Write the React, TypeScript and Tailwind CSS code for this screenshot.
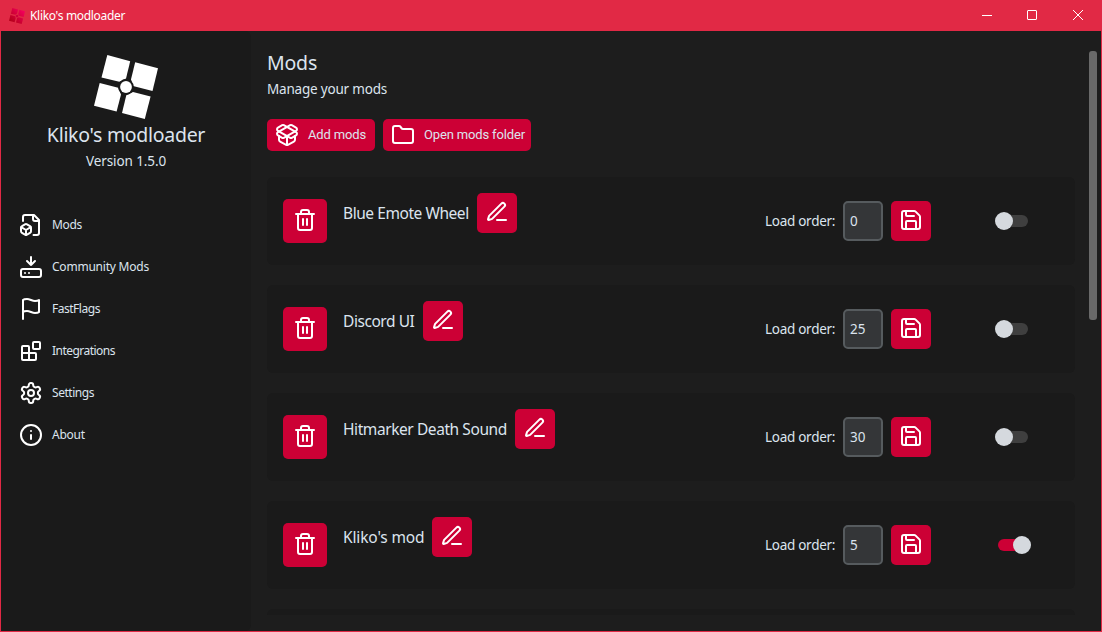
import React from "react";

type IconProps = { children: React.ReactNode };

function Icon({ children }: IconProps) {
  return (
    <svg
      className="block size-6 shrink-0"
      viewBox="0 0 24 24"
      fill="none"
      stroke="#ffffff"
      strokeWidth="2"
      strokeLinecap="round"
      strokeLinejoin="round"
    >
      {children}
    </svg>
  );
}

const FileBox = () => (
  <Icon>
    <path d="M14.5 22H18a2 2 0 0 0 2-2V7l-5-5H6a2 2 0 0 0-2 2v4" />
    <path d="M14 2v4a2 2 0 0 0 2 2h4" />
    <path d="M3 13.1a2 2 0 0 0-1 1.76v3.24a2 2 0 0 0 .97 1.78L6 21.7a2 2 0 0 0 2.03.01L11 19.9a2 2 0 0 0 1-1.76V14.9a2 2 0 0 0-.97-1.78L8 11.3a2 2 0 0 0-2.03-.01Z" />
    <path d="M7 17v5M11.7 14.2 7 17l-4.7-2.8" />
  </Icon>
);
const DriveDownload = () => (
  <Icon>
    <path d="M12 2v8M16 6l-4 4-4-4" />
    <rect width="20" height="8" x="2" y="14" rx="2" />
    <path d="M6 18h.01M10 18h.01" />
  </Icon>
);
const Flag = () => (
  <Icon>
    <path d="M4 15s1-1 4-1 5 2 8 2 4-1 4-1V3s-1 1-4 1-5-2-8-2-4 1-4 1zM4 22v-7" />
  </Icon>
);
const Blocks = () => (
  <Icon>
    <rect width="7" height="7" x="14" y="3" rx="1" />
    <path d="M10 21V8a1 1 0 0 0-1-1H4a1 1 0 0 0-1 1v12a1 1 0 0 0 1 1h12a1 1 0 0 0 1-1v-5a1 1 0 0 0-1-1H3" />
  </Icon>
);
const Gear = () => (
  <Icon>
    <path d="M12.22 2h-.44a2 2 0 0 0-2 2v.18a2 2 0 0 1-1 1.73l-.43.25a2 2 0 0 1-2 0l-.15-.08a2 2 0 0 0-2.73.73l-.22.38a2 2 0 0 0 .73 2.73l.15.1a2 2 0 0 1 1 1.72v.51a2 2 0 0 1-1 1.74l-.15.09a2 2 0 0 0-.73 2.73l.22.38a2 2 0 0 0 2.73.73l.15-.08a2 2 0 0 1 2 0l.43.25a2 2 0 0 1 1 1.73V20a2 2 0 0 0 2 2h.44a2 2 0 0 0 2-2v-.18a2 2 0 0 1 1-1.73l.43-.25a2 2 0 0 1 2 0l.15.08a2 2 0 0 0 2.73-.73l.22-.39a2 2 0 0 0-.73-2.73l-.15-.08a2 2 0 0 1-1-1.74v-.5a2 2 0 0 1 1-1.74l.15-.09a2 2 0 0 0 .73-2.73l-.22-.38a2 2 0 0 0-2.73-.73l-.15.08a2 2 0 0 1-2 0l-.43-.25a2 2 0 0 1-1-1.73V4a2 2 0 0 0-2-2z" />
    <circle cx="12" cy="12" r="3" />
  </Icon>
);
const Info = () => (
  <Icon>
    <circle cx="12" cy="12" r="10" />
    <path d="M12 16v-4M12 8h.01" />
  </Icon>
);
const PackageOpen = () => (
  <Icon>
    <path d="M12 22v-9" />
    <path d="M15.17 2.21a1.67 1.67 0 0 1 1.63 0L21 4.57a1.93 1.93 0 0 1 0 3.36L8.82 14.79a1.655 1.655 0 0 1-1.64 0L3 12.43a1.93 1.93 0 0 1 0-3.36z" />
    <path d="M20 13v3.87a2.06 2.06 0 0 1-1.11 1.83l-6 3.08a1.93 1.93 0 0 1-1.78 0l-6-3.08A2.06 2.06 0 0 1 4 16.87V13" />
    <path d="M21 12.43a1.93 1.93 0 0 0 0-3.36L8.83 2.2a1.64 1.64 0 0 0-1.63 0L3 4.57a1.93 1.93 0 0 0 0 3.36l12.18 6.86a1.636 1.636 0 0 0 1.63 0z" />
  </Icon>
);
const Folder = () => (
  <Icon>
    <path d="M20 20a2 2 0 0 0 2-2V8a2 2 0 0 0-2-2h-7.9a2 2 0 0 1-1.69-.9L9.6 3.9A2 2 0 0 0 7.93 3H4a2 2 0 0 0-2 2v13a2 2 0 0 0 2 2Z" />
  </Icon>
);
const Trash = () => (
  <Icon>
    <path d="M3 6h18M19 6v14c0 1-1 2-2 2H7c-1 0-2-1-2-2V6M8 6V4c0-1 1-2 2-2h4c1 0 2 1 2 2v2M10 11v6M14 11v6" />
  </Icon>
);
const Pen = () => (
  <Icon>
    <path d="M12 20h9" />
    <path d="M16.376 3.622a1 1 0 0 1 3.002 3.002L7.368 18.635a2 2 0 0 1-.855.506l-2.872.838a.5.5 0 0 1-.62-.62l.838-2.872a2 2 0 0 1 .506-.854z" />
  </Icon>
);
const Save = () => (
  <Icon>
    <path d="M15.2 3a2 2 0 0 1 1.4.6l3.8 3.8a2 2 0 0 1 .6 1.4V19a2 2 0 0 1-2 2H5a2 2 0 0 1-2-2V5a2 2 0 0 1 2-2z" />
    <path d="M17 21v-7a1 1 0 0 0-1-1H8a1 1 0 0 0-1 1v7M7 3v4a1 1 0 0 0 1 1h7" />
  </Icon>
);

const QUADS = [
  "107.3,55 130.2,61.2 126,78.4 119.3,81.8 101.5,77.5",
  "135.2,62.3 158,68.3 152.5,91 133,86 131,79.3",
  "99.7,83 118.2,87.8 121,94.5 116.6,111.5 94,105.8",
  "133,92 150.6,96.5 144.8,119 122,113 126.3,95.3",
];

function Logo() {
  return (
    <svg className="block size-16" viewBox="94 55 64 64" fill="#ffffff">
      {QUADS.map((points) => (
        <polygon key={points} points={points} />
      ))}
      <circle cx="126" cy="87" r="7.9" fill="#1a1a1a" />
      <circle cx="126" cy="87" r="5.9" />
    </svg>
  );
}

function TitleLogo() {
  return (
    <svg className="block size-4" viewBox="94 55 64 64">
      <defs>
        <linearGradient id="brand" x1="94" y1="119" x2="158" y2="55" gradientUnits="userSpaceOnUse">
          <stop offset="0" stopColor="#a8000c" />
          <stop offset="1" stopColor="#ff0069" />
        </linearGradient>
      </defs>
      {QUADS.map((points) => (
        <polygon key={points} points={points} fill="url(#brand)" />
      ))}
      <circle cx="126" cy="87" r="5.5" fill="#d0003c" />
    </svg>
  );
}

const NAV = [
  { label: "Mods", icon: <FileBox />, track: "tracking-[-0.3px]" },
  { label: "Community Mods", icon: <DriveDownload />, track: "tracking-[-0.22px]" },
  { label: "FastFlags", icon: <Flag />, track: "tracking-[-0.48px]" },
  { label: "Integrations", icon: <Blocks />, track: "tracking-[-0.53px]" },
  { label: "Settings", icon: <Gear />, track: "tracking-[-0.46px]" },
  { label: "About", icon: <Info />, track: "tracking-[-0.25px]" },
];

const MODS = [
  { name: "Blue Emote Wheel", order: "0", on: false, width: "w-[126px] tracking-[-0.44px]" },
  { name: "Discord UI", order: "25", on: false, width: "w-[72px] tracking-[-0.44px]" },
  { name: "Hitmarker Death Sound", order: "30", on: false, width: "w-[164px] tracking-[-0.42px]" },
  { name: "Kliko's mod", order: "5", on: true, width: "w-[81px] tracking-[-0.14px]" },
];

function Toggle({ on }: { on: boolean }) {
  return on ? (
    <div className="ml-[67px] flex h-[18px] w-[33px] items-center">
      <div className="h-3 w-6 rounded-l-full bg-[#cc0035]" />
      <div className="-ml-[9px] size-[18px] shrink-0 rounded-full bg-[#d5d9de]" />
    </div>
  ) : (
    <div className="ml-16 flex h-[18px] w-[33px] items-center">
      <div className="z-10 size-[18px] shrink-0 rounded-full bg-[#d5d9de]" />
      <div className="-ml-[9px] h-3 w-6 rounded-r-full bg-[#3f3f3f]" />
    </div>
  );
}

function ModCard({ mod }: { mod: (typeof MODS)[number] }) {
  return (
    <div className="flex h-[88px] shrink-0 items-center rounded-md bg-[#1a1a1a] pl-4">
      <button className="flex size-11 items-center justify-center rounded-[5px] bg-[#cc0035] pb-0.5">
        <Trash />
      </button>
      <div className="ml-4 flex items-center self-start pt-4">
        <span className={`${mod.width} text-[15.5px] leading-5 whitespace-nowrap`}>{mod.name}</span>
        <button className="ml-2 flex size-10 items-center justify-center rounded-[5px] bg-[#cc0035] pb-0.5">
          <Pen />
        </button>
      </div>
      <div className="ml-auto flex w-[310px] items-center">
        <span className="w-[78px] text-[13.5px] tracking-[-0.28px] whitespace-nowrap">Load order:</span>
        <div className="flex size-10 items-center rounded-[5px] border-2 border-[#565b5e] bg-[#343638] pl-[5px] text-[13.5px]">
          {mod.order}
        </div>
        <button className="ml-2 flex size-10 items-center justify-center rounded-[5px] bg-[#cc0035] pb-0.5">
          <Save />
        </button>
        <Toggle on={mod.on} />
      </div>
    </div>
  );
}

export default function App() {
  return (
    <div className="flex h-[632px] w-[1102px] flex-col overflow-hidden bg-[#e12945] font-['Noto_Sans',sans-serif] text-[#dce4ee]">
      <header className="flex h-[31px] shrink-0 items-center pl-[9px] text-white">
        <TitleLogo />
        <span className="ml-[5px] text-[12px] tracking-[-0.31px]">Kliko's modloader</span>
        <svg className="ml-auto block h-[31px] w-[138px]" viewBox="964 0 138 31" fill="none" stroke="#ffffff">
          <path d="M982 15.5h10" />
          <path d="M1073 10l10 10M1083 10l-10 10" />
          <rect x="1027.5" y="10.5" width="9" height="9" rx="0.5" />
        </svg>
      </header>
      <div className="mx-px mb-px flex min-h-0 grow bg-[#1d1d1d]">
        <aside className="flex w-[250px] shrink-0 flex-col items-center rounded-r-md bg-[#1a1a1a] pt-6">
          <Logo />
          <h1 className="mt-0.5 text-[19.5px] leading-7 tracking-[-0.29px]">Kliko's modloader</h1>
          <p className="mt-0.5 text-[13.5px] leading-5 tracking-[-0.1px]">Version 1.5.0</p>
          <nav className="mt-[33px] w-full">
            {NAV.map((item) => (
              <a key={item.label} className="flex h-[42px] items-center pl-[18px]">
                {item.icon}
                <span className={`ml-[9px] text-[12px] ${item.track}`}>{item.label}</span>
              </a>
            ))}
          </nav>
        </aside>
        <main className="flex w-[824px] shrink-0 flex-col pt-[18px] pl-4">
          <h2 className="text-[19.5px] leading-7 tracking-[-0.2px]">Mods</h2>
          <p className="text-[13.5px] leading-6 tracking-[-0.2px]">Manage your mods</p>
          <div className="mt-[18px] flex shrink-0 gap-2">
            <button className="flex h-8 w-[108px] items-center rounded-[5px] bg-[#cc0035] pl-2">
              <PackageOpen />
              <span className="ml-[9px] font-['Roboto',sans-serif] text-[13px] tracking-[-0.15px] whitespace-nowrap">Add mods</span>
            </button>
            <button className="flex h-8 w-[148px] items-center rounded-[5px] bg-[#cc0035] pl-2">
              <Folder />
              <span className="ml-[9px] font-['Roboto',sans-serif] text-[13px] tracking-[-0.15px] whitespace-nowrap">Open mods folder</span>
            </button>
          </div>
          <div className="mt-[26px] flex h-[438px] shrink-0 flex-col gap-5 overflow-hidden">
            {MODS.map((mod) => (
              <ModCard key={mod.name} mod={mod} />
            ))}
            <div className="h-[88px] shrink-0 rounded-md bg-[#1a1a1a]" />
          </div>
        </main>
        <div className="mt-5 ml-[14px] h-[269px] w-2 rounded-[3px] bg-[#696969]" />
      </div>
    </div>
  );
}
